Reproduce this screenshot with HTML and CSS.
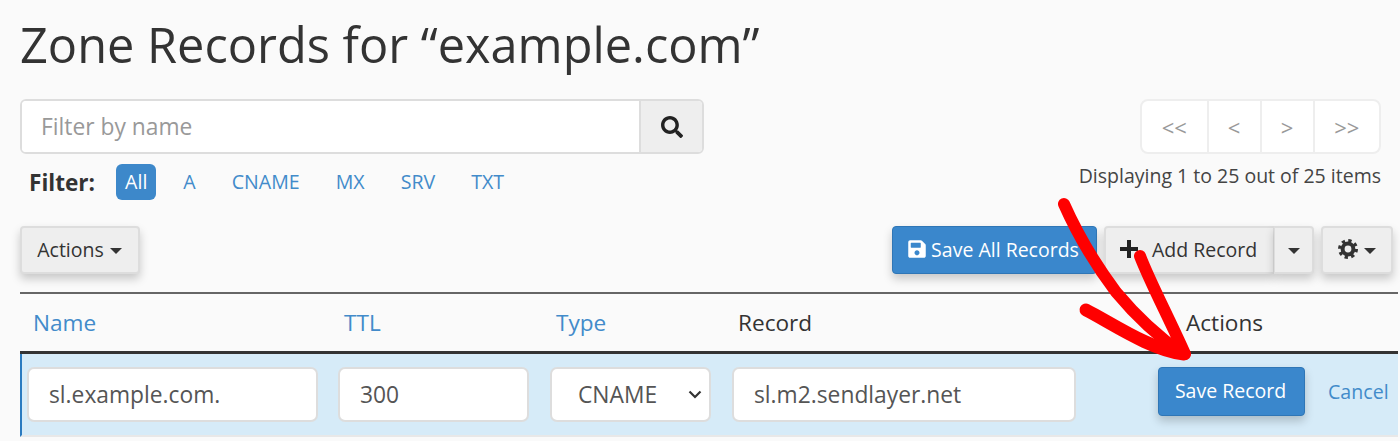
FILE: index.html
```html
<!DOCTYPE html>
<html lang="en">
<head>
<meta charset="utf-8">
<title>Zone Records</title>
<link rel="stylesheet" href="styles.css">
</head>
<body>
<h1 class="title">Zone Records for “example.com”</h1>
<div class="top">
  <div class="top-left">
    <div class="search">
      <input class="search-input" type="text" placeholder="Filter by name">
      <button class="search-btn" type="button" aria-label="Search">
        <svg class="icon-search" viewBox="0 0 512 512"><path d="M505 442.7L405.3 343c-4.5-4.5-10.6-7-17-7H372c27.6-35.3 44-79.7 44-128C416 93.1 322.9 0 208 0S0 93.1 0 208s93.1 208 208 208c48.3 0 92.7-16.4 128-44v16.3c0 6.4 2.5 12.5 7 17l99.7 99.7c9.4 9.4 24.6 9.4 33.9 0l28.3-28.3c9.4-9.4 9.4-24.6.1-34zM208 336c-70.7 0-128-57.2-128-128 0-70.7 57.2-128 128-128 70.7 0 128 57.2 128 128 0 70.7-57.2 128-128 128z"/></svg>
      </button>
    </div>
    <div class="filters">
      <strong class="filter-label">Filter:</strong>
      <a class="pill active">All</a>
      <a class="pill">A</a>
      <a class="pill">CNAME</a>
      <a class="pill">MX</a>
      <a class="pill">SRV</a>
      <a class="pill">TXT</a>
    </div>
  </div>
  <div class="top-right">
    <div class="pager">
      <span class="page page-wide">&lt;&lt;</span>
      <span class="page">&lt;</span>
      <span class="page">&gt;</span>
      <span class="page page-wide">&gt;&gt;</span>
    </div>
    <div class="count">Displaying 1 to 25 out of 25 items</div>
  </div>
</div>
<div class="toolbar">
  <button class="btn btn-default btn-actions" type="button">Actions <i class="caret"></i></button>
  <div class="toolbar-right">
    <button class="btn btn-primary btn-saveall" type="button">
      <svg class="icon-save" viewBox="0 0 448 512"><path d="M433.941 129.941l-83.882-83.882A48 48 0 0 0 316.118 32H48C21.49 32 0 53.49 0 80v352c0 26.51 21.49 48 48 48h352c26.51 0 48-21.49 48-48V163.882a48 48 0 0 0-14.059-33.941zM224 416c-35.346 0-64-28.654-64-64 0-35.346 28.654-64 64-64s64 28.654 64 64c0 35.346-28.654 64-64 64zm96-304.52V212c0 6.627-5.373 12-12 12H76c-6.627 0-12-5.373-12-12V108c0-6.627 5.373-12 12-12h228.52c3.183 0 6.235 1.264 8.485 3.515l3.48 3.48A11.996 11.996 0 0 1 320 111.48z"/></svg>
      Save All Records
    </button>
    <div class="split">
      <button class="btn btn-default btn-add" type="button">
        <svg class="icon-plus" viewBox="0 0 18 18"><path d="M7 0h4v7h7v4h-7v7H7v-7H0V7h7z"/></svg>
        Add Record
      </button>
      <button class="btn btn-default btn-split" type="button" aria-label="More"><i class="caret"></i></button>
    </div>
    <button class="btn btn-default btn-gear" type="button" aria-label="Settings">
      <svg class="icon-gear" viewBox="0 0 20 20">
        <circle cx="10" cy="10" r="5.4" fill="none" stroke="#333" stroke-width="4"/>
        <circle cx="10" cy="10" r="8.4" fill="none" stroke="#333" stroke-width="3.2" stroke-dasharray="3.3 3.3"/>
      </svg>
      <i class="caret"></i>
    </button>
  </div>
</div>
<div class="records">
  <div class="row head">
    <a class="col-h link">Name</a>
    <a class="col-h link">TTL</a>
    <a class="col-h link">Type</a>
    <span class="col-h">Record</span>
    <span class="col-h col-actions">Actions</span>
  </div>
  <div class="row edit">
    <input class="field" type="text" value="sl.example.com.">
    <input class="field" type="text" value="300">
    <select class="field field-select"><option>CNAME</option></select>
    <input class="field" type="text" value="sl.m2.sendlayer.net">
    <div class="row-actions">
      <button class="btn btn-primary btn-save" type="button">Save Record</button>
      <a class="cancel">Cancel</a>
    </div>
  </div>
</div>
<svg class="arrow" viewBox="0 0 1400 441" aria-hidden="true">
  <path d="M1064 204C1080 240 1098 268 1116 292C1136 316 1160 338 1183 354" fill="none" stroke="#f00" stroke-width="12" stroke-linecap="round"/>
  <path d="M1140 256C1150 282 1168 316 1185 354" fill="none" stroke="#f00" stroke-width="12" stroke-linecap="round"/>
  <path d="M1086 310C1110 322 1150 350 1184 354" fill="none" stroke="#f00" stroke-width="13" stroke-linecap="round"/>
</svg>
</body>
</html>
```

FILE: styles.css
```css
* { box-sizing: border-box; }
html, body { margin: 0; height: 441px; overflow: hidden; }
body {
  position: relative;
  background: #fafafa;
  color: #333;
  font-family: "Open Sans", sans-serif;
  font-size: 20px;
  padding: 0 0 0 20px;
}
.title {
  margin: 0;
  padding-top: 11px;
  height: 99px;
  font-size: 48.7px;
  line-height: 66px;
  font-weight: 400;
}
.top { display: flex; justify-content: space-between; width: 1361px; height: 127px; }
.top-left { width: 684px; }
.search {
  display: flex;
  height: 55px;
  border: 2px solid #ddd;
  border-radius: 6px;
  overflow: hidden;
  background: #fff;
}
.search-input {
  flex: 1;
  min-width: 0;
  border: 0;
  padding: 0 19px;
  font: inherit;
  font-size: 22.8px;
  color: #333;
  background: #fff;
  outline: 0;
}
.search-input::placeholder { color: #999; opacity: 1; }
.search-btn {
  width: 63px;
  border: 0;
  border-left: 2px solid #ddd;
  background: #eee;
  display: flex;
  align-items: center;
  justify-content: center;
  padding: 0;
}
.icon-search { width: 22px; height: 22px; fill: #222; }
.filters { display: flex; align-items: center; margin-top: 10px; padding-left: 9px; height: 36px; }
.filter-label { font-size: 22.6px; margin-right: 21px; font-weight: 700; }
.pill {
  color: #428bca;
  font-size: 19.6px;
  line-height: 36px;
  height: 36px;
  padding: 0 9px;
  margin-right: 18px;
  border-radius: 6px;
}
.pill.active { background: #3d88ca; color: #fff; }
.top-right { display: flex; flex-direction: column; align-items: flex-end; }
.pager {
  display: flex;
  height: 55px;
  width: 241px;
  border: 2px solid #eee;
  border-radius: 8px;
  background: #fff;
  color: #999;
  font-size: 22px;
}
.page {
  flex: 53px 0 0;
  display: flex;
  align-items: center;
  justify-content: center;
  border-left: 2px solid #eee;
}
.page-wide { flex: 1; }
.page:first-child { border-left: 0; }
.count { margin-top: 9px; font-size: 19.5px; line-height: 26px; color: #444; white-space: nowrap; }
.toolbar { display: flex; justify-content: space-between; width: 1373px; height: 48px; }
.toolbar-right { display: flex; gap: 7px; }
.btn {
  font: inherit;
  font-size: 19.5px;
  height: 48px;
  border-radius: 4px;
  display: flex;
  align-items: center;
  justify-content: center;
  box-shadow: 0 5px 10px rgba(0, 0, 0, 0.2);
  white-space: nowrap;
  padding: 0 0 2px;
}
.btn-default { background: #eee; border: 2px solid #ddd; color: #333; }
.btn-primary { background: #3a87cc; border: 1px solid #2f76b6; color: #fff; }
.btn-actions { width: 120px; gap: 6px; padding-right: 1px; }
.btn-saveall { width: 205px; gap: 5px; padding-right: 2px; }
.icon-save { width: 18px; height: 20px; fill: #fff; }
.split { display: flex; }
.btn-add { width: 170px; gap: 14px; border-radius: 4px 0 0 4px; border-right-width: 1px; padding-right: 2px; }
.btn-split { width: 40px; border-radius: 0 4px 4px 0; border-left-width: 1px; }
.icon-plus { width: 18px; height: 18px; fill: #222; }
.btn-gear { width: 72px; gap: 6px; }
.icon-gear { width: 20px; height: 20px; }
.caret {
  display: inline-block;
  width: 0;
  height: 0;
  border-top: 6px solid #333;
  border-left: 6.5px solid transparent;
  border-right: 6.5px solid transparent;
  margin-top: 3px;
}
.records { width: 1378px; margin-top: 18px; }
.row {
  display: grid;
  grid-template-columns: 311px 212px 182px 426px 1fr;
  align-items: center;
}
.head {
  height: 62px;
  border-top: 2px solid #666;
  border-bottom: 3px solid #333;
  padding-left: 13px;
}
.col-h { font-size: 22.6px; line-height: 28px; color: #333; }
.col-h.link { color: #428bca; }
.col-actions { padding-left: 22px; }
.edit {
  height: 83px;
  background: #d6ebf8;
  border-left: 2px solid #2b7bc0;
  padding-left: 5px;
  border-bottom: 2px solid #e8e8e8;
}
.field {
  height: 55px;
  border: 2px solid #ddd;
  border-radius: 7px;
  background: #fff;
  padding: 0 20px;
  font: inherit;
  font-size: 22.8px;
  color: #555;
  outline: 0;
  width: 100%;
}
.edit .field:nth-child(1) { width: 291px; }
.edit .field:nth-child(2) { width: 191px; }
.edit .field:nth-child(3) {
  width: 161px;
  padding-left: 26px;
  appearance: none;
  background: #fff url("data:image/svg+xml,%3Csvg xmlns='http://www.w3.org/2000/svg' viewBox='0 0 14 9'%3E%3Cpath d='M1.5 1.5L7 7l5.5-5.5' fill='none' stroke='%23333' stroke-width='2.2'/%3E%3C/svg%3E") no-repeat right 7px center / 14px 9px;
}
.edit .field:nth-child(4) { width: 344px; }
.row-actions { display: flex; align-items: center; gap: 24px; margin-top: -7px; }
.btn-save { width: 147px; height: 49px; padding-right: 2px; }
.cancel { color: #428bca; font-size: 19.6px; margin-left: -1px; }
.arrow { position: absolute; left: 0; top: 0; width: 1400px; height: 441px; pointer-events: none; }
```
